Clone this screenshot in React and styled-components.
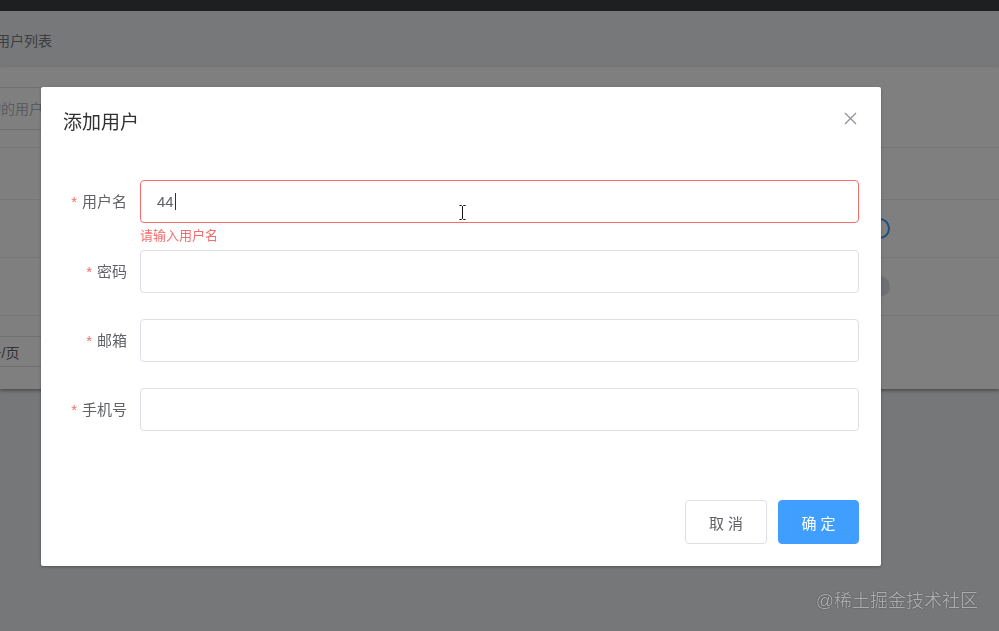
import React from "react";
import styled, { createGlobalStyle } from "styled-components";

const GlobalStyle = createGlobalStyle`
  html, body {
    margin: 0;
    padding: 0;
    height: 100%;
  }
  body {
    font-family: "Liberation Sans", "Noto Sans CJK SC", sans-serif;
    background: #eceef2;
    overflow: hidden;
  }
  * {
    box-sizing: border-box;
  }
`;

/* ---------- page behind the modal ---------- */

const Page = styled.div`
  min-height: 631px;
  background: #eceef2;
  overflow: hidden;
`;

const TopBar = styled.div`
  height: 11px;
  background: #3c3e42;
`;

const Crumbs = styled.div`
  height: 54px;
  padding-top: 4px;
  background: #eef0f4;
  display: flex;
  align-items: center;
  font-size: 14px;
  color: #7a7c80;
`;

const CrumbText = styled.span`
  margin-left: -4px;
`;

const Card = styled.section`
  margin-top: 2px;
  height: 322px;
  padding-top: 20px;
  background: #fff;
  box-shadow: 0 2px 3px rgba(0, 0, 0, 0.35);
`;

const Search = styled.input`
  display: block;
  width: 320px;
  height: 43px;
  margin-left: -85px;
  padding: 0 15px;
  border: 1px solid #dcdfe6;
  border-radius: 4px;
  font: 14px "Liberation Sans", "Noto Sans CJK SC", sans-serif;
  outline: none;
  &::placeholder {
    color: #b4b8bf;
  }
`;

const Table = styled.div`
  margin-top: 17px;
  border-top: 1px solid #ebeef5;
`;

const Row = styled.div`
  display: grid;
  grid-template-columns: 1fr 152px;
  align-items: center;
  height: ${(p) => (p.head ? 52 : 58)}px;
  border-bottom: 1px solid #ebeef5;
`;

const Switch = styled.span`
  position: relative;
  display: block;
  width: 43px;
  height: 21px;
  border-radius: 11px;
  background: ${(p) => (p.on ? "#409eff" : "#dcdfe6")};
  &::after {
    content: "";
    position: absolute;
    top: 2px;
    left: ${(p) => (p.on ? "24px" : "2px")};
    width: 17px;
    height: 17px;
    border-radius: 50%;
    background: #fff;
  }
`;

const Pager = styled.div`
  margin-top: 20px;
  display: flex;
`;

const SizeSelect = styled.div`
  width: 110px;
  height: 31px;
  margin-left: -44px;
  padding: 0 15px;
  border: 1px solid #dcdfe6;
  border-radius: 3px;
  display: flex;
  align-items: center;
  font-size: 14px;
  color: #606266;
`;

/* ---------- modal ---------- */

const Overlay = styled.div`
  position: fixed;
  inset: 0;
  background: rgba(0, 0, 0, 0.5);
`;

const Dialog = styled.div`
  position: fixed;
  top: 87px;
  left: 41px;
  width: 840px;
  background: #fff;
  border-radius: 2px;
  box-shadow: 0 1px 3px rgba(0, 0, 0, 0.3);
`;

const Header = styled.div`
  padding: 23px 22px 11px 22px;
`;

const Title = styled.span`
  font-size: 19px;
  line-height: 26px;
  color: #303133;
`;

const Close = styled.button`
  position: absolute;
  top: 25px;
  right: 24px;
  width: 13px;
  height: 13px;
  padding: 0;
  border: none;
  background: none;
  display: flex;
`;

const Body = styled.div`
  padding: 33px 22px 33px 20px;
`;

const Item = styled.div`
  display: flex;
  margin-bottom: ${(p) => (p.error ? 27 : 26)}px;
`;

const Label = styled.label`
  width: 79px;
  padding-right: 13px;
  text-align: right;
  font-size: 15px;
  line-height: 43px;
  color: #606266;
`;

const Star = styled.span`
  color: #f56c6c;
  margin-right: 5px;
`;

const Control = styled.div`
  position: relative;
  flex: 1;
`;

const Field = styled.div`
  height: 43px;
  padding: 0 16px;
  border: 1px solid ${(p) => (p.error ? "#f56c6c" : "#dcdfe6")};
  border-radius: 4px;
  display: flex;
  align-items: center;
  font-size: 15px;
  color: #606266;
`;

const Caret = styled.span`
  width: 1px;
  height: 17px;
  margin-left: 1px;
  background: #303133;
`;

const Error = styled.div`
  position: absolute;
  top: 100%;
  left: 0;
  padding-top: 6px;
  font-size: 13px;
  line-height: 1;
  color: #f56c6c;
`;

const Footer = styled.div`
  padding: 10px 22px 22px;
  display: flex;
  justify-content: flex-end;
  gap: 11px;
`;

const Button = styled.button`
  width: ${(p) => (p.primary ? 81 : 82)}px;
  height: 44px;
  border-radius: 4px;
  border: 1px solid ${(p) => (p.primary ? "#409eff" : "#dcdfe6")};
  background: ${(p) => (p.primary ? "#409eff" : "#fff")};
  color: ${(p) => (p.primary ? "#fff" : "#606266")};
  font: 15px "Liberation Sans", "Noto Sans CJK SC", sans-serif;
`;

const Pointer = styled.div`
  position: fixed;
  left: 458px;
  top: 204px;
  display: flex;
`;

const Watermark = styled.div`
  position: fixed;
  right: 21px;
  bottom: 18px;
  font-size: 18px;
  line-height: 24px;
  color: #a9aaab;
  text-shadow: 0 0 1px rgba(0, 0, 0, 0.7);
`;

const fields = [
  { label: "用户名", value: "44", error: "请输入用户名" },
  { label: "密码" },
  { label: "邮箱" },
  { label: "手机号" },
];

const App = () => {
  return (
    <>
      <GlobalStyle />
      <Page>
        <TopBar />
        <Crumbs>
          <CrumbText>用户列表</CrumbText>
        </Crumbs>
        <Card>
          <Search placeholder="请输入查询的用户名" readOnly />
          <Table>
            <Row head />
            <Row>
              <span />
              <Switch on />
            </Row>
            <Row>
              <span />
              <Switch />
            </Row>
          </Table>
          <Pager>
            <SizeSelect>10条/页</SizeSelect>
          </Pager>
        </Card>
      </Page>

      <Overlay />
      <Dialog>
        <Header>
          <Title>添加用户</Title>
          <Close aria-label="关闭">
            <svg width="13" height="13" viewBox="0 0 13 13">
              <path d="M1 1 L12 12 M12 1 L1 12" stroke="#909399" strokeWidth="1.3" fill="none" />
            </svg>
          </Close>
        </Header>
        <Body>
          {fields.map((f) => (
            <Item key={f.label} error={!!f.error}>
              <Label>
                <Star>*</Star>
                {f.label}
              </Label>
              <Control>
                <Field error={!!f.error}>
                  {f.value}
                  {f.value && <Caret />}
                </Field>
                {f.error && <Error>{f.error}</Error>}
              </Control>
            </Item>
          ))}
        </Body>
        <Footer>
          <Button>取 消</Button>
          <Button primary>确 定</Button>
        </Footer>
      </Dialog>

      <Pointer>
        <svg width="9" height="17" viewBox="0 0 9 17">
          <path
            d="M1.5 1.5 H3.5 L4.5 2.5 L5.5 1.5 H7.5 M4.5 2.5 V14.5 M1.5 15.5 H3.5 L4.5 14.5 L5.5 15.5 H7.5"
            stroke="#fff"
            strokeWidth="2.5"
            fill="none"
          />
          <path
            d="M1.5 1.5 H3.5 L4.5 2.5 L5.5 1.5 H7.5 M4.5 2.5 V14.5 M1.5 15.5 H3.5 L4.5 14.5 L5.5 15.5 H7.5"
            stroke="#111"
            strokeWidth="1"
            fill="none"
          />
        </svg>
      </Pointer>

      <Watermark>@稀土掘金技术社区</Watermark>
    </>
  );
};

export default App;
